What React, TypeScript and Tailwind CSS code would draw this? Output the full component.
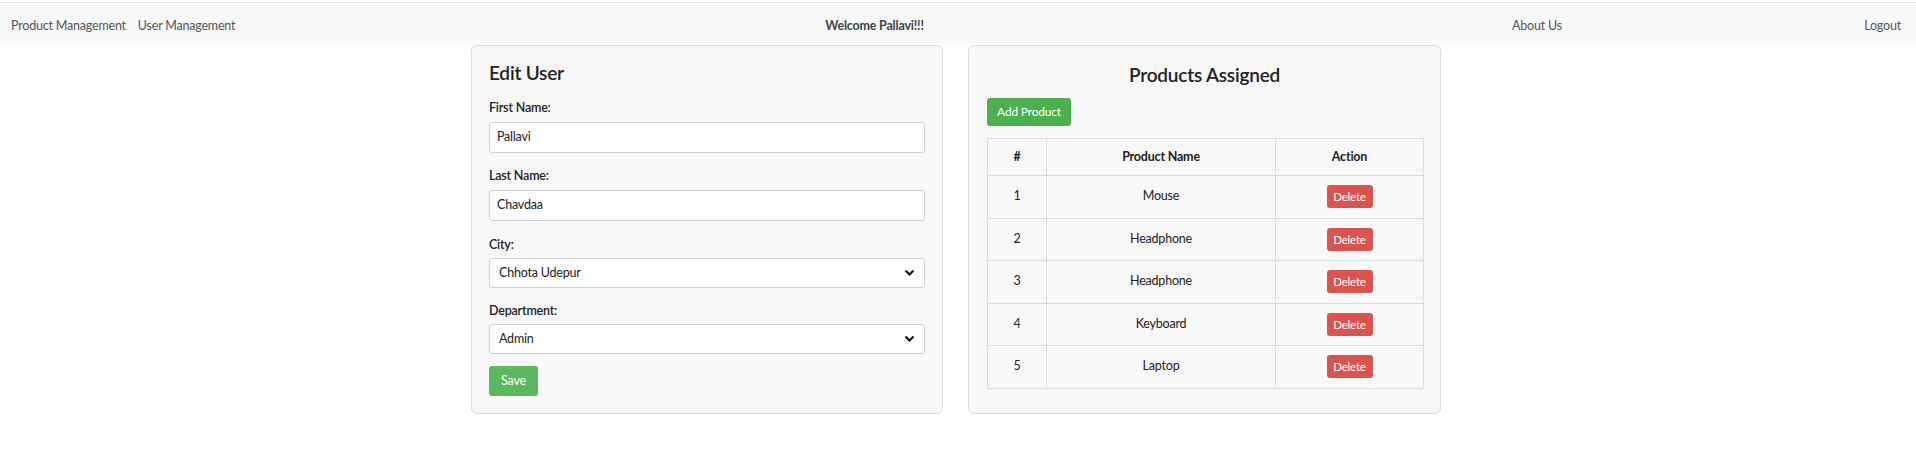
import React from 'react';

const products = ['Mouse', 'Headphone', 'Headphone', 'Keyboard', 'Laptop'];

function Chevron() {
  return (
    <svg width="11" height="8" viewBox="0 0 11 8" className="pointer-events-none absolute right-[9px] top-1/2 -translate-y-1/2">
      <path d="M1.5 1.5 L5.5 5.5 L9.5 1.5" fill="none" stroke="#111" strokeWidth="2.2" />
    </svg>
  );
}

export default function App() {
  return (
    <div className="min-h-[475px] bg-white pt-[2px] font-['Lato','Open_Sans',sans-serif] tracking-[-0.2px] text-[#222]">
      {/* Navbar */}
      <nav className="flex h-[42px] items-center whitespace-nowrap border-t border-[#e3e3e3] bg-[#f8f9fa] pl-[11px] pr-[15px] pt-[5px] text-[12.5px] text-[#555]">
        <div className="flex w-[226px] shrink-0 gap-[12px]">
          <span>Product Management</span>
          <span>User Management</span>
        </div>
        <div className="flex-1 text-center font-bold text-[#444]">Welcome Pallavi!!!</div>
        <div className="flex w-[389px] shrink-0 justify-between">
          <span>About Us</span>
          <span>Logout</span>
        </div>
      </nav>

      {/* Main Content */}
      <div className="mt-px flex justify-center gap-[25px] pr-[4px]">
        {/* Edit User */}
        <div className="h-[369px] w-[472px] rounded-[6px] border border-[#dcdcdc] bg-[#f8f8f8] px-[17px] pt-[13px]">
          <h2 className="mb-[13px] text-[19px] font-semibold leading-[28px] text-[#222]">Edit User</h2>

          <label className="block text-[12.5px] font-semibold leading-[16px]">First Name:</label>
          <div className="mt-[6px] flex h-[31px] items-center rounded-[3px] border border-[#cfcfcf] bg-white px-[7px] text-[12.5px]">
            Pallavi
          </div>

          <label className="mt-[15px] block text-[12.5px] font-semibold leading-[16px]">Last Name:</label>
          <div className="mt-[6px] flex h-[31px] items-center rounded-[3px] border border-[#cfcfcf] bg-white px-[7px] text-[12.5px]">
            Chavdaa
          </div>

          <label className="mt-[16px] block text-[12.5px] font-semibold leading-[16px]">City:</label>
          <div className="relative mt-[5px] flex h-[30px] items-center rounded-[3px] border border-[#cfcfcf] bg-white px-[9px] text-[12.5px]">
            Chhota Udepur
            <Chevron />
          </div>

          <label className="mt-[15px] block text-[12.5px] font-semibold leading-[16px]">Department:</label>
          <div className="relative mt-[5px] flex h-[30px] items-center rounded-[3px] border border-[#cfcfcf] bg-white px-[9px] text-[12.5px]">
            Admin
            <Chevron />
          </div>

          <button className="mt-[12px] h-[30px] w-[49px] rounded-[3px] bg-[#5cb85c] text-[12.5px] text-white">Save</button>
        </div>

        {/* Products Assigned */}
        <div className="h-[369px] w-[473px] rounded-[6px] border border-[#dcdcdc] bg-[#f8f8f8] px-[18px] pt-[15px]">
          <h2 className="text-center text-[19px] font-semibold leading-[28px] text-[#222]">Products Assigned</h2>
          <button className="mt-[9px] h-[28px] w-[84px] rounded-[3px] bg-[#4caf50] text-[12px] text-white">Add Product</button>

          <table className="mt-[12px] w-[437px] border-collapse text-center text-[12.5px]">
            <thead>
              <tr className="h-[37px]">
                <th className="w-[59px] border border-[#dcdcdc] font-bold">#</th>
                <th className="w-[229px] border border-[#dcdcdc] font-bold">Product Name</th>
                <th className="border border-[#dcdcdc] font-bold">Action</th>
              </tr>
            </thead>
            <tbody>
              {products.map((p, i) => (
                <tr key={i} className="h-[42.5px]">
                  <td className="border border-[#dcdcdc]">{i + 1}</td>
                  <td className="border border-[#dcdcdc]">{p}</td>
                  <td className="border border-[#dcdcdc]">
                    <button className="h-[23px] w-[46px] rounded-[3px] bg-[#d9534f] text-[11.5px] text-white">Delete</button>
                  </td>
                </tr>
              ))}
            </tbody>
          </table>
        </div>
      </div>
    </div>
  );
}
